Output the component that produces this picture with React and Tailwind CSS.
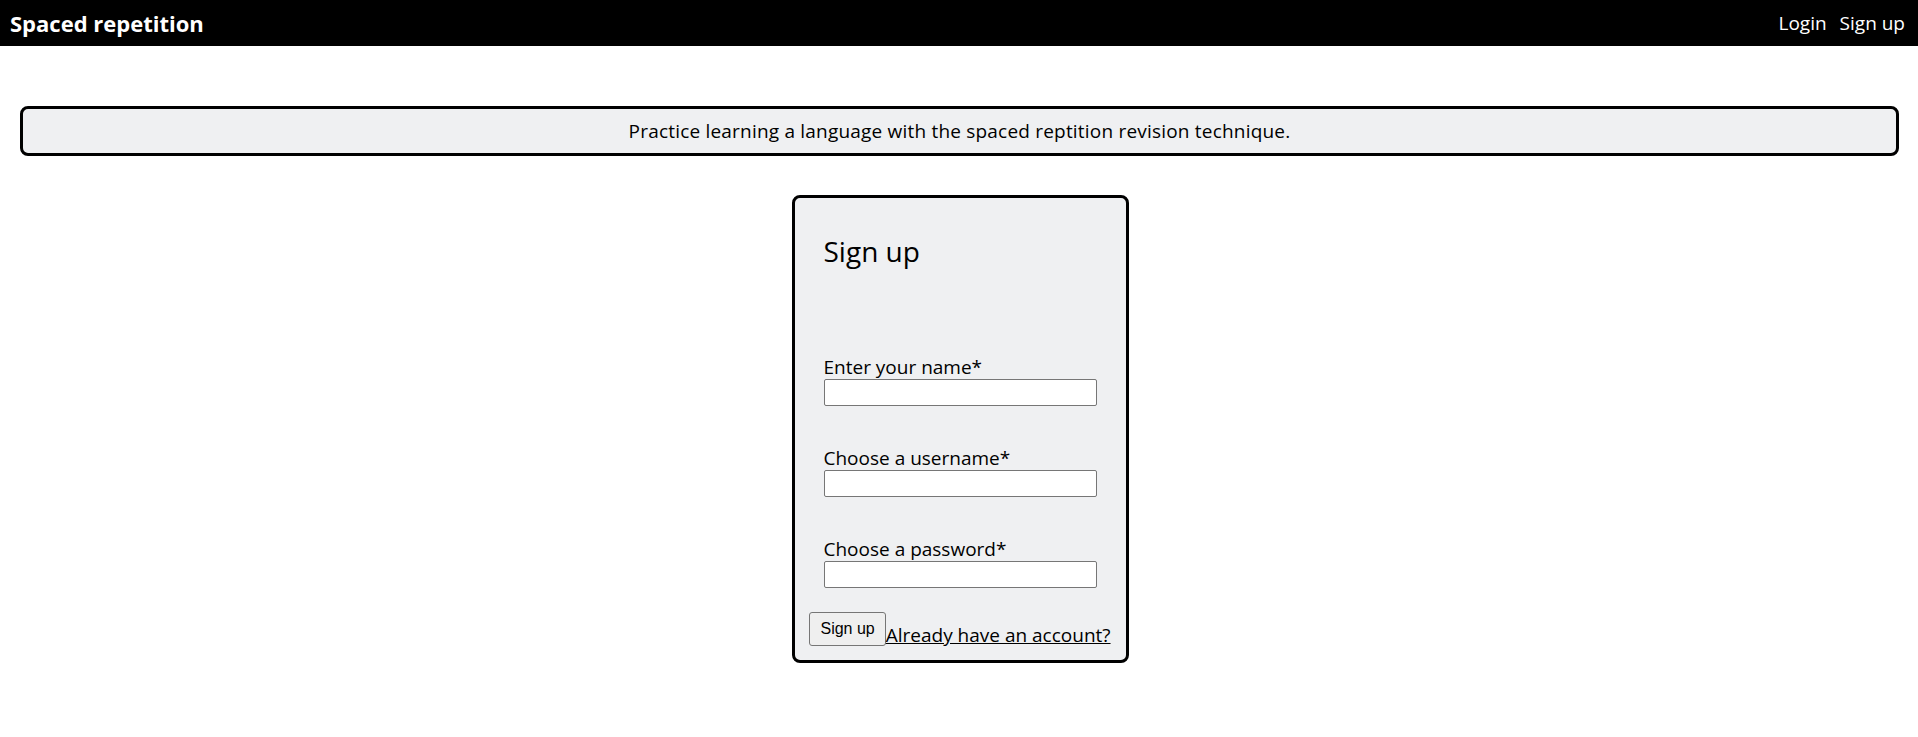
import React from 'react';

const Field = ({ label, type = 'text' }) => (
  <div className="flex flex-col">
    <label className="text-[19px] leading-[24px] text-black">{label}</label>
    <input
      type={type}
      className="h-[27px] w-full border border-[#767676] rounded-[2px] bg-white px-1 outline-none"
    />
  </div>
);

const App = () => {
  return (
    <div className="min-h-screen bg-white font-['Open_Sans',sans-serif] font-medium text-black">
      {/* Top bar */}
      <nav className="flex h-[46px] items-center justify-between bg-black pl-[10px] pr-[13px] text-white">
        <h1 className="text-[22px] font-bold leading-[28px]">Spaced repetition</h1>
        <div className="flex gap-[13px] text-[19px] leading-[24px]">
          <a href="#">Login</a>
          <a href="#">Sign up</a>
        </div>
      </nav>

      {/* Intro banner */}
      <div className="mt-[60px] ml-[20px] mr-[19px] flex h-[50px] items-center justify-center rounded-lg border-[3px] border-black bg-[#eff0f2]">
        <p className="text-[19px] leading-[24px] tracking-[0.2px]">
          Practice learning a language with the spaced reptition revision technique.
        </p>
      </div>

      {/* Sign up card */}
      <div className="mt-[39px] ml-[2px] flex justify-center">
        <div className="w-[337px] rounded-lg border-[3px] border-black bg-[#eff0f2] px-[29px] pt-[38px] pb-[14px]">
          <h2 className="text-[28px] leading-[31px]">Sign up</h2>
          <form className="mt-[88px] flex flex-col gap-[40px]" onSubmit={(e) => e.preventDefault()}>
            <Field label="Enter your name*" />
            <Field label="Choose a username*" />
            <Field label="Choose a password*" type="password" />
          </form>
          <div className="mt-[24px] flex items-end justify-center">
            <button
              type="submit"
              style={{ fontFamily: '"Liberation Sans", Arial, sans-serif' }}
              className="h-[34px] shrink-0 rounded-[3px] border border-[#767676] bg-[#efefef] px-[10px] text-[16px] font-normal text-black"
            >
              Sign up
            </button>
            <a href="#" className="shrink-0 whitespace-nowrap text-[19px] leading-[22px] text-black underline">
              Already have an account?
            </a>
          </div>
        </div>
      </div>
    </div>
  );
};

export default App;
